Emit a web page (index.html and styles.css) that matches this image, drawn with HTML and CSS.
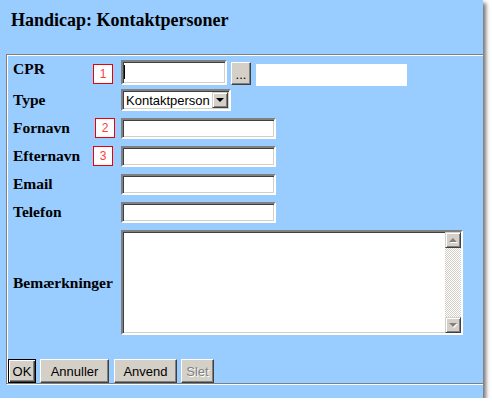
FILE: index.html
```html
<!DOCTYPE html>
<html lang="da">
<head>
<meta charset="utf-8">
<title>Handicap: Kontaktpersoner</title>
<link rel="stylesheet" href="styles.css">
</head>
<body>
<div class="window">
  <h1 class="title">Handicap: Kontaktpersoner</h1>
  <div class="box">
    <div class="form">
      <label class="lbl lbl-cpr">CPR</label>
      <div class="badge-cell"><span class="badge badge-1">1</span></div>
      <div class="field field-cpr">
        <span class="inp-wrap"><input class="inp inp-cpr" type="text"><span class="caret"></span></span>
        <button class="btn btn-dots" type="button">...</button>
        <input class="ro" type="text" readonly>
      </div>

      <label class="lbl">Type</label>
      <div class="badge-cell"></div>
      <div class="field">
        <span class="sel">
          <select class="sel-el"><option>Kontaktperson</option></select>
          <span class="sel-btn"><span class="tri-down"></span></span>
        </span>
      </div>

      <label class="lbl">Fornavn</label>
      <div class="badge-cell"><span class="badge badge-2">2</span></div>
      <div class="field"><input class="inp inp-wide" type="text"></div>

      <label class="lbl">Efternavn</label>
      <div class="badge-cell"><span class="badge">3</span></div>
      <div class="field"><input class="inp inp-wide" type="text"></div>

      <label class="lbl">Email</label>
      <div class="badge-cell"></div>
      <div class="field"><input class="inp inp-wide" type="text"></div>

      <label class="lbl">Telefon</label>
      <div class="badge-cell"></div>
      <div class="field"><input class="inp inp-wide" type="text"></div>

      <label class="lbl lbl-ta">Bemærkninger</label>
      <div class="badge-cell"></div>
      <div class="field field-ta">
        <div class="ta">
          <textarea class="ta-el"></textarea>
          <div class="sb">
            <span class="sb-btn"><span class="tri-up-dis"></span></span>
            <span class="sb-track"></span>
            <span class="sb-btn"><span class="tri-down-dis"></span></span>
          </div>
        </div>
      </div>
    </div>
    <div class="actions">
      <button class="btn btn-ok" type="button">OK</button>
      <button class="btn btn-cancel" type="button">Annuller</button>
      <button class="btn btn-apply" type="button">Anvend</button>
      <button class="btn btn-del" type="button" disabled>Slet</button>
    </div>
  </div>
</div>
</body>
</html>
```
FILE: styles.css
```css
html, body {
  margin: 0;
  padding: 0;
  background: #ffffff;
}

.window {
  width: 483px;
  height: 398px;
  background: #99ccff;
  overflow: hidden;
  box-shadow: 3px 3px 4px rgba(0, 0, 0, 0.55);
  box-sizing: border-box;
}

.title {
  margin: 0;
  height: 44px;
  padding: 10px 0 0 11px;
  font: bold 18px "Liberation Serif", serif;
  color: #000;
}

.box {
  margin-left: 6px;
  width: 520px;
  border: 1px solid #808080;
  box-shadow: inset 1px 1px 0 #ffffff, 1px 1px 0 #ffffff;
  padding: 3px 0 0 1px;
  box-sizing: border-box;
}

.form {
  margin-left: 5px;
  display: grid;
  grid-template-columns: 80px 28px 1fr;
  grid-template-rows: repeat(6, 28px) auto;
}

.lbl {
  font: bold 15.5px "Liberation Serif", serif;
  color: #000;
  align-self: center;
  white-space: nowrap;
}

.lbl-cpr {
  align-self: start;
  margin-top: 2px;
}

.lbl-ta {
  align-self: center;
  margin-top: 4px;
}

.badge-cell {
  display: flex;
  align-items: center;
}

.badge {
  width: 20px;
  height: 20px;
  box-sizing: border-box;
  border: 1px solid #ee0000;
  background: #ffffff;
  color: #ff3b3b;
  font: 12px "Liberation Sans", sans-serif;
  display: flex;
  align-items: center;
  justify-content: center;
}

.badge-1 {
  margin-top: 4px;
}

.badge-2 {
  margin-left: 2px;
}

.field {
  display: flex;
  align-items: center;
}

.field-cpr {
  align-items: flex-start;
}

.inp {
  box-sizing: border-box;
  height: 21px;
  margin: 0;
  padding: 0 3px;
  border: 2px solid;
  border-color: #808080 #ffffff #ffffff #808080;
  box-shadow: inset 1px 1px 0 #404040, inset -1px -1px 0 #d4d0c8;
  background: #ffffff;
  font: 13px "Liberation Sans", sans-serif;
  outline: none;
}

.inp-wrap {
  position: relative;
  display: block;
  margin-top: 2px;
}

.inp-cpr {
  width: 106px;
  height: 25px;
  display: block;
}

.caret {
  position: absolute;
  left: 3px;
  top: 5px;
  width: 1px;
  height: 14px;
  background: #000;
}

.inp-wide {
  width: 155px;
}

.btn {
  box-sizing: border-box;
  height: 24px;
  margin: 0;
  padding: 0;
  background: #d4d0c8;
  border: 1px solid;
  border-color: #ffffff #404040 #404040 #ffffff;
  box-shadow: inset -1px -1px 0 #808080;
  font: 13px "Liberation Sans", sans-serif;
  color: #000;
}

.btn-dots {
  width: 20px;
  height: 23px;
  margin: 4px 0 0 4px;
  padding-top: 3px;
  line-height: 14px;
}

.ro {
  box-sizing: border-box;
  width: 151px;
  height: 22px;
  margin: 6px 0 0 5px;
  border: 0;
  background: #ffffff;
  outline: none;
}

.sel {
  box-sizing: border-box;
  width: 110px;
  height: 22px;
  display: flex;
  border: 2px solid;
  border-color: #808080 #ffffff #ffffff #808080;
  box-shadow: inset 1px 1px 0 #404040, inset -1px -1px 0 #d4d0c8;
  background: #ffffff;
  padding: 1px 1px 1px 1px;
}

.sel-el {
  appearance: none;
  -webkit-appearance: none;
  flex: 1;
  min-width: 0;
  border: 0;
  background: transparent;
  font: 13px "Liberation Sans", sans-serif;
  color: #000;
  padding: 0 0 0 2px;
  margin: 0;
  outline: none;
}

.sel-btn {
  box-sizing: border-box;
  width: 16px;
  background: #d4d0c8;
  border: 1px solid;
  border-color: #d4d0c8 #404040 #404040 #d4d0c8;
  box-shadow: inset 1px 1px 0 #ffffff, inset -1px -1px 0 #808080;
  display: flex;
  align-items: center;
  justify-content: center;
}

.tri-down {
  width: 0;
  height: 0;
  border-left: 4px solid transparent;
  border-right: 4px solid transparent;
  border-top: 4px solid #000;
}

.field-ta {
  align-items: flex-start;
  padding-top: 4px;
}

.ta {
  box-sizing: border-box;
  width: 342px;
  height: 105px;
  display: flex;
  border: 2px solid;
  border-color: #808080 #ffffff #ffffff #808080;
  box-shadow: inset 1px 1px 0 #404040, inset -1px -1px 0 #d4d0c8;
  background: #ffffff;
}

.ta-el {
  flex: 1;
  border: 0;
  resize: none;
  background: transparent;
  outline: none;
  margin: 1px 0 1px 1px;
  font: 13px "Liberation Sans", sans-serif;
}

.sb {
  width: 16px;
  display: flex;
  flex-direction: column;
}

.sb-btn {
  box-sizing: border-box;
  height: 16px;
  background: #d4d0c8;
  border: 1px solid;
  border-color: #d4d0c8 #404040 #404040 #d4d0c8;
  box-shadow: inset 1px 1px 0 #ffffff, inset -1px -1px 0 #808080;
  display: flex;
  align-items: center;
  justify-content: center;
}

.sb-track {
  flex: 1;
  background-color: #ffffff;
  background-image: repeating-conic-gradient(#d4d0c8 0 25%, #ffffff 0 50%);
  background-size: 2px 2px;
}

.tri-up-dis {
  width: 0;
  height: 0;
  border-left: 4px solid transparent;
  border-right: 4px solid transparent;
  border-bottom: 4px solid #808080;
  filter: drop-shadow(1px 1px 0 #ffffff);
}

.tri-down-dis {
  width: 0;
  height: 0;
  border-left: 4px solid transparent;
  border-right: 4px solid transparent;
  border-top: 4px solid #808080;
  filter: drop-shadow(1px 1px 0 #ffffff);
}

.actions {
  display: flex;
  margin-top: 24px;
}

.btn-ok {
  width: 28px;
  border-color: #000000;
  box-shadow: inset 1px 1px 0 #ffffff, inset -1px -1px 0 #404040, inset -2px -2px 0 #808080;
}

.btn-cancel {
  width: 69px;
  margin-left: 4px;
}

.btn-apply {
  width: 63px;
  margin-left: 5px;
}

.btn-del {
  width: 33px;
  margin-left: 4px;
  color: #808080;
  text-shadow: 1px 1px 0 #ffffff;
}
```
